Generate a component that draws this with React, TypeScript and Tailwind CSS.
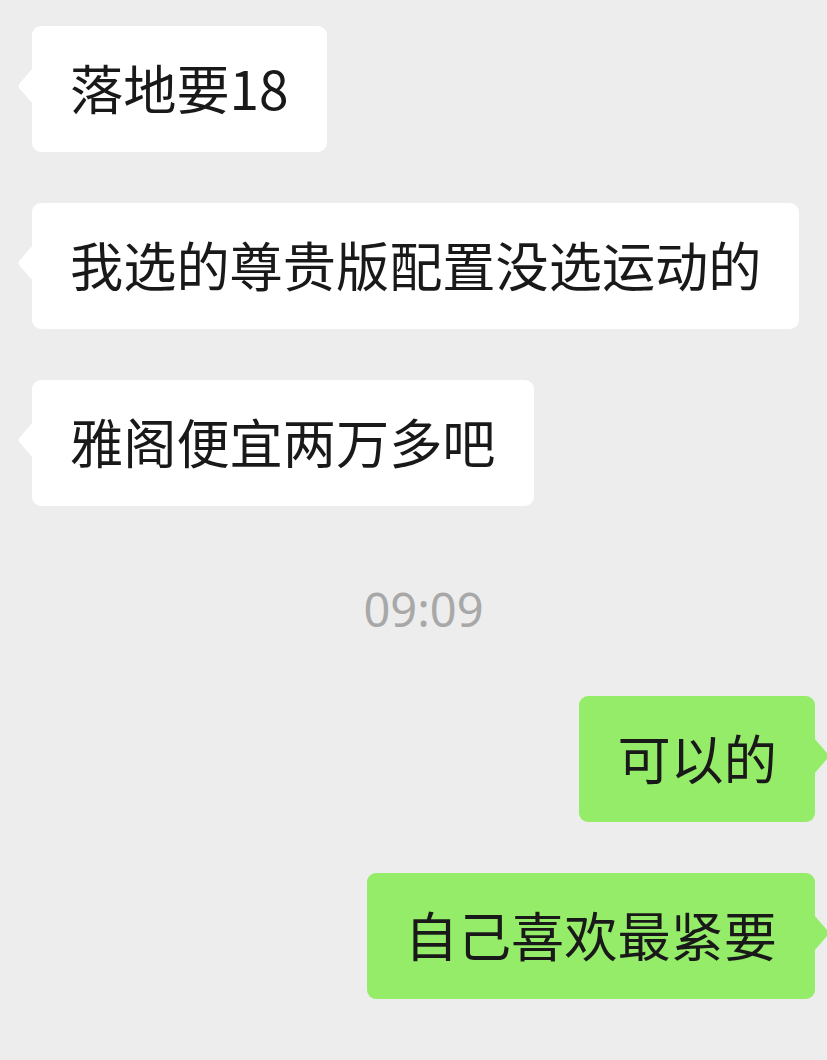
import React from "react";

type Msg =
  | { kind: "in" | "out"; text: string }
  | { kind: "time"; text: string };

const messages: Msg[] = [
  { kind: "in", text: "落地要18" },
  { kind: "in", text: "我选的尊贵版配置没选运动的" },
  { kind: "in", text: "雅阁便宜两万多吧" },
  { kind: "time", text: "09:09" },
  { kind: "out", text: "可以的" },
  { kind: "out", text: "自己喜欢最紧要" },
];

const cjk = { fontFamily: '"Noto Sans CJK SC", "Noto Sans", sans-serif' };

const Bubble = ({ text, out }: { text: string; out: boolean }) => (
  <div className={`flex w-full ${out ? "justify-end pr-[12px]" : "justify-start pl-[32px]"}`}>
    <div
      className={`relative rounded-[9px] px-[38px] pt-[23px] pb-[27px] text-[53.2px] leading-[76px] text-[#191919] whitespace-nowrap ${
        out ? "bg-[#95EC69]" : "bg-white"
      }`}
      style={cjk}
    >
      {text}
      {out ? (
        <svg
          className="absolute right-[-15px] top-[42px]"
          width="16"
          height="36"
          viewBox="0 0 16 36"
        >
          <path d="M0 0 L13 15 Q16 18 13 21 L0 36 Z" fill="#95EC69" />
        </svg>
      ) : (
        <svg
          className="absolute left-[-15px] top-[42px]"
          width="16"
          height="36"
          viewBox="0 0 16 36"
        >
          <path d="M16 0 L3 15 Q0 18 3 21 L16 36 Z" fill="#ffffff" />
        </svg>
      )}
    </div>
  </div>
);

export default function App() {
  return (
    <div className="min-h-[1060px] w-full bg-[#EDEDED] overflow-hidden pt-[26px]">
      <div className="flex flex-col gap-[51px]">
        {messages.slice(0, 3).map((m, i) => (
          <Bubble key={i} text={m.text} out={false} />
        ))}
      </div>

      <div
        className="mt-[79px] mb-[63px] pl-[20px] text-center text-[47px] leading-[48px] text-[#A8A8A8]"
        style={{ fontFamily: '"Noto Sans", sans-serif' }}
      >
        09:09
      </div>

      <div className="flex flex-col gap-[51px]">
        {messages.slice(4).map((m, i) => (
          <Bubble key={i} text={m.text} out={true} />
        ))}
      </div>
    </div>
  );
}
